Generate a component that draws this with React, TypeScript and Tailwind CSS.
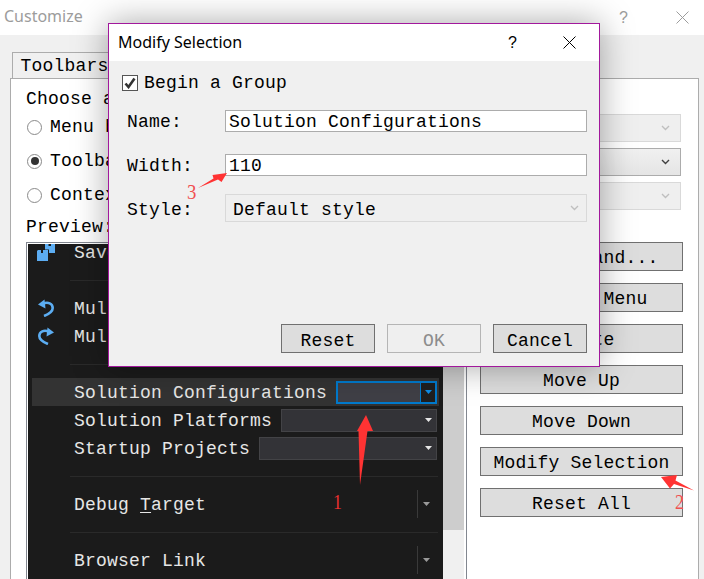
import type { ReactNode } from 'react'

const mono = "font-['Liberation_Mono','Courier_New',monospace] text-[18px] tracking-[0.2px]"

function CloseIcon({ color }: { color: string }) {
  return (
    <svg width="13" height="13" viewBox="0 0 13 13" fill="none" stroke={color} strokeWidth="1">
      <path d="M0.5 0.5L12.5 12.5M12.5 0.5L0.5 12.5" />
    </svg>
  )
}

function Chevron({ color }: { color: string }) {
  return (
    <svg width="9" height="6" viewBox="0 0 9 6" fill="none" stroke={color} strokeWidth="1.4">
      <path d="M1 1L4.5 4.5L8 1" />
    </svg>
  )
}

function Radio({ checked }: { checked?: boolean }) {
  return (
    <span className="ml-px flex h-[15px] w-[15px] shrink-0 items-center justify-center rounded-full border border-[#8a8a8a] bg-white">
      {checked && <span className="h-[8px] w-[8px] rounded-full bg-[#333333]" />}
    </span>
  )
}

function RadioRow({ label, checked, enabled }: { label: string; checked?: boolean; enabled?: boolean }) {
  return (
    <div className="flex h-[34px] items-center">
      <Radio checked={checked} />
      <span className="ml-2">{label}</span>
      <div
        className={
          'ml-auto mt-[2px] flex h-[28px] w-[300px] items-center justify-end pr-[10px] ' +
          (enabled
            ? 'border border-[#acacac] bg-gradient-to-b from-[#f0f0f0] to-[#e5e5e5]'
            : 'border border-[#d9d9d9] bg-[#efefef]')
        }
      >
        <Chevron color={enabled ? '#404040' : '#bfbfbf'} />
      </div>
    </div>
  )
}

function SideButton({ children }: { children: ReactNode }) {
  return (
    <button className="h-[29px] w-[203px] border border-[#707070] bg-[#dddddd] pt-[2px] text-center leading-none text-black">
      {children}
    </button>
  )
}

function DialogButton({ children, disabled }: { children: ReactNode; disabled?: boolean }) {
  return (
    <button
      className={
        'h-[29px] w-[94px] border pt-[4px] leading-none ' +
        (disabled ? 'border-[#b5b5b5] bg-[#efefef] text-[#8c8c8c]' : 'border-[#707070] bg-[#dddddd] text-black')
      }
    >
      {children}
    </button>
  )
}

function Separator() {
  return (
    <div className="flex h-[28px] items-center pl-[42px] pr-[5px]">
      <div className="h-px w-full bg-[#2a2a2a]" />
    </div>
  )
}

function ComboArrow({ color = '#e6e6e6' }: { color?: string }) {
  return (
    <svg width="7" height="4" viewBox="0 0 7 4" fill={color}>
      <path d="M0 0H7L3.5 4Z" />
    </svg>
  )
}

function ComboRow({ label, width, active }: { label: string; width: number; active?: boolean }) {
  return (
    <div className={'mx-[4px] flex h-[28px] items-center pr-[2px] ' + (active ? 'bg-[#333333]' : '')}>
      <span className="ml-[42px] pt-[2px] text-[#e6e6e6]">{label}</span>
      <div
        style={{ width }}
        className={
          'ml-auto flex h-[23px] items-center justify-end ' +
          (active ? 'border-2 border-[#007acc] bg-[#3f3f46]' : 'border border-[#434346] bg-[#333337]')
        }
      >
        <div
          className={
            'flex h-full w-[15px] items-center justify-center ' +
            (active ? 'border-l border-[#007acc] bg-[#1f1f1f]' : '')
          }
        >
          <ComboArrow color={active ? '#0e8ee8' : '#e6e6e6'} />
        </div>
      </div>
    </div>
  )
}

function SplitRow({ children }: { children: ReactNode }) {
  return (
    <div className="flex h-[28px] items-center pl-[46px] pr-[13px] text-[#e6e6e6]">
      <span className="pt-[2px]">{children}</span>
      <div className="ml-auto flex h-full w-[13px] items-center justify-end border-l border-[#3a3a3a]">
        <ComboArrow color="#9a9a9a" />
      </div>
    </div>
  )
}

function IconRow({ icon, label }: { icon: ReactNode; label: string }) {
  return (
    <div className="flex h-[28px] items-center text-[#e6e6e6]">
      <div className="flex w-[46px] pl-[10px]">{icon}</div>
      <span className="pt-[2px]">{label}</span>
    </div>
  )
}

function SaveAllIcon() {
  return (
    <svg width="18" height="18" viewBox="0 0 18 18" fill="#5cadf2" className="-ml-px">
      <path d="M8 0H18V10H12V6.500H8Z" />
      <path d="M0 8L1 7H11V18H0Z" />
      <path d="M4 7H6V10H4Z" fill="#1b1b1b" />
      <path d="M11.500 0H14V3H11.500Z" fill="#1b1b1b" />
    </svg>
  )
}

function UndoIcon({ flip }: { flip?: boolean }) {
  return (
    <svg width="16" height="18" viewBox="0 0 16 18" fill="none" className={flip ? '-scale-x-100' : ''}>
      <path d="M0 5.500L6.500 0.500L7.500 9.500Z" fill="#5cadf2" />
      <path d="M5 4.700C10 2.500 14.700 4.500 14.700 9C14.700 12 11 15 6 17" stroke="#5cadf2" strokeWidth="2.6" />
    </svg>
  )
}

function Annotations() {
  return (
    <svg width="704" height="579" viewBox="0 0 704 579" className="pointer-events-none absolute left-0 top-0">
      <path d="M366 415L373 431L367.500 431L360 485L358.500 431L357 431Z" fill="#ff3333" />
      <path d="M661 477L677 475L675.500 480.500L694 490.500L674 484L670 488.500Z" fill="#ff3333" />
      <path d="M198 188L213.500 178.500L212.500 175L227 173L221.500 182L218 179.500Z" fill="#ff3333" />
    </svg>
  )
}

export default function App() {
  return (
    <div className={'relative h-[579px] w-[704px] overflow-hidden bg-[#f0f0f0] text-black ' + mono}>
      {/* parent window */}
      <div className="flex h-[35px] items-center bg-white pl-[4px] pr-[15px] font-['Noto_Sans',sans-serif] text-[16px] tracking-normal text-[#9c9c9c]">
        <span className="pb-[3px]">Customize</span>
        <span className="ml-auto font-['Liberation_Sans',sans-serif] text-[16px]">?</span>
        <span className="ml-[48px] flex">
          <CloseIcon color="#9c9c9c" />
        </span>
      </div>

      <div className="pl-[10px] pr-[5px] pt-[17px]">
        <div className="ml-[2px] flex h-[27px] w-[120px] items-center border border-b-0 border-[#acacac] bg-[#f0f0f0] pl-[7.500px]">
          Toolbars
        </div>
        <div className="-mt-px h-[510px] border border-[#acacac] bg-white pl-[15px] pr-[17px] pt-[9px]">
          <div className="flex h-5 items-center pt-[2px]">Choose a toolbar or menu to rearrange:</div>
          <div className="mt-[2px]">
            <RadioRow label="Menu bar:" />
            <RadioRow label="Toolbar:" checked enabled />
            <RadioRow label="Context menu:" />
          </div>
          <div className="mt-[4px] flex h-5 items-center pt-[2px]">Preview:</div>

          <div className="mt-[6px] flex">
            <div className="flex h-[400px] w-[441px] shrink-0 border-x border-t border-[#828790] bg-white pl-px pr-[2px] pt-px">
              <div className="h-full w-[415px] shrink-0 overflow-hidden bg-[#1b1b1b]">
                <div className="-mt-[6px]">
                  <IconRow icon={<SaveAllIcon />} label="Save All" />
                  <Separator />
                  <IconRow icon={<UndoIcon />} label="Multi Undo" />
                  <IconRow icon={<UndoIcon flip />} label="Multi Redo" />
                  <Separator />
                  <ComboRow label="Solution Configurations" width={101} active />
                  <ComboRow label="Solution Platforms" width={156} />
                  <ComboRow label="Startup Projects" width={178} />
                  <Separator />
                  <SplitRow>
                    Debug <span className="underline underline-offset-2">T</span>arget
                  </SplitRow>
                  <Separator />
                  <SplitRow>Browser Link</SplitRow>
                </div>
              </div>
              <div className="w-[21px] shrink-0 bg-[#f0f0f0]">
                <div className="h-[286px] bg-[#cdcdcd]" />
              </div>
            </div>
            <div className="ml-[13px] flex shrink-0 flex-col gap-[12px]">
              <SideButton>Add Command...</SideButton>
              <SideButton>Add New Menu</SideButton>
              <SideButton>Delete</SideButton>
              <SideButton>Move Up</SideButton>
              <SideButton>Move Down</SideButton>
              <SideButton>Modify Selection</SideButton>
              <SideButton>Reset All</SideButton>
            </div>
          </div>
        </div>
      </div>

      {/* modal dialog */}
      <div className="absolute left-[108px] top-[23px] flex h-[344px] w-[492px] flex-col border border-[#a2189c] bg-[#f0f0f0] shadow-[0_0_32px_rgba(0,0,0,0.35)]">
        <div className="flex h-[37px] shrink-0 items-center bg-white pl-[9px] pr-[23px] font-['Noto_Sans',sans-serif] text-[16px] tracking-normal text-black">
          <span className="pb-[2px]">Modify Selection</span>
          <span className="ml-auto font-['Liberation_Sans',sans-serif] text-[16px]">?</span>
          <span className="ml-[46px] flex">
            <CloseIcon color="#000000" />
          </span>
        </div>
        <div className="flex flex-1 flex-col pl-[13px] pr-[12px] pt-[13px]">
          <div className="flex h-[17px] items-center">
            <span className="flex h-[16px] w-[16px] items-center justify-center border border-[#555555] bg-white">
              <svg width="12" height="12" viewBox="0 0 12 12" fill="none" stroke="#333333" strokeWidth="2.6">
                <path d="M1.500 6.500L4.500 10L10.500 1.500" />
              </svg>
            </span>
            <span className="ml-[6px] pt-[2px]">Begin a Group</span>
          </div>
          <div className="mt-[18px] flex h-[23px] items-center pl-[5px]">
            <span className="w-[98px] pt-[4px]">Name:</span>
            <div className="flex h-[22px] flex-1 items-center border border-[#acacac] bg-white pl-[3px] pt-[4px]">
              Solution Configurations
            </div>
          </div>
          <div className="mt-[21px] flex h-[23px] items-center pl-[5px]">
            <span className="w-[98px] pt-[4px]">Width:</span>
            <div className="flex h-[22px] flex-1 items-center border border-[#acacac] bg-white pl-[3px] pt-[4px]">
              110
            </div>
          </div>
          <div className="mt-[18px] flex h-[28px] items-center pl-[5px]">
            <span className="w-[98px] pt-[4px]">Style:</span>
            <div className="flex h-[28px] flex-1 items-center justify-between border border-[#d9d9d9] bg-[#efefef] pl-[7px] pr-[7px]">
              <span className="pt-[4px]">Default style</span>
              <Chevron color="#bfbfbf" />
            </div>
          </div>
          <div className="mt-[102px] flex justify-end gap-[12px]">
            <DialogButton>Reset</DialogButton>
            <DialogButton disabled>OK</DialogButton>
            <DialogButton>Cancel</DialogButton>
          </div>
        </div>
      </div>

      <Annotations />
      <span className="absolute left-[187px] top-[180px] origin-left scale-x-[0.85] font-['Liberation_Serif',serif] text-[22px] leading-6 tracking-normal text-[#f05050]">
        3
      </span>
      <span className="absolute left-[333px] top-[490px] origin-left scale-x-[0.85] font-['Liberation_Serif',serif] text-[21px] leading-6 tracking-normal text-[#e83030]">
        1
      </span>
      <span className="absolute left-[675px] top-[490px] origin-left scale-x-[0.85] font-['Liberation_Serif',serif] text-[21px] leading-6 tracking-normal text-[#f05050]">
        2
      </span>
    </div>
  )
}
